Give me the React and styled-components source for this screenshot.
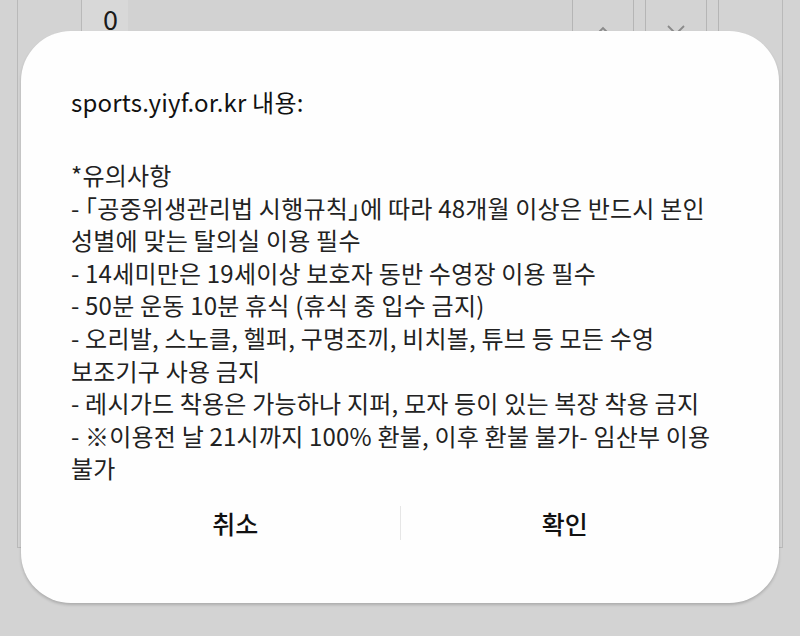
import React from "react";
import styled, { createGlobalStyle } from "styled-components";

const GlobalStyle = createGlobalStyle`
  html, body {
    margin: 0;
    padding: 0;
    background: #d3d3d3;
    font-family: "Noto Sans CJK KR", "Noto Sans", sans-serif;
  }
`;

const Page = styled.div`
  width: 800px;
  height: 636px;
  overflow: hidden;
  position: relative;
  background: #d3d3d3;
`;

const Panel = styled.div`
  margin: -40px 17px 0 17px;
  height: 588px;
  box-sizing: border-box;
  border: 1px solid #b9b9b9;
  border-top: none;
  display: flex;
  padding-left: 63px;
`;

const InputCell = styled.div`
  flex: 1;
  height: 120px;
  border-left: 1px solid #b9b9b9;
  background: linear-gradient(90deg, #d8d8d8 0 46px, #d2d2d2 46px);
  padding: 42px 0 0 21px;
  box-sizing: border-box;
  font-size: 27px;
  color: #1a1a1a;
  line-height: 34px;
`;

const SpinButton = styled.div`
  width: ${(p) => p.$w}px;
  height: 120px;
  margin-left: ${(p) => p.$gap}px;
  border-left: 1px solid #b5b5b5;
  border-right: ${(p) => (p.$edge ? "none" : "1px solid #b5b5b5")};
  box-sizing: border-box;
  display: flex;
  justify-content: center;
  padding-top: 64px;
  color: #8a8a8a;
`;

const Overlay = styled.div`
  position: absolute;
  inset: 0;
  display: flex;
  align-items: center;
  justify-content: center;
`;

const Dialog = styled.div`
  width: 758px;
  height: 572px;
  box-sizing: border-box;
  background: #fefefe;
  border-radius: 50px;
  box-shadow: 0 2px 3px rgba(0, 0, 0, 0.18);
  padding: 56px 50px 0 50px;
  display: flex;
  flex-direction: column;
  margin-top: -2px;
`;

const Title = styled.div`
  font-size: 24px;
  line-height: 30px;
  color: #111;
  letter-spacing: 0.2px;
`;

const Message = styled.div`
  margin-top: 42px;
  font-size: 24px;
  line-height: 32.6px;
  color: #222;
  white-space: pre;
  letter-spacing: 0.2px;
`;

const Bracket = styled.span`
  font-feature-settings: "halt";
`;

const ButtonRow = styled.div`
  margin-top: 10px;
  height: 56px;
  display: flex;
  align-items: center;
`;

const DialogButton = styled.button`
  flex: 1;
  height: 100%;
  border: none;
  background: transparent;
  font-family: inherit;
  font-size: 25px;
  font-weight: 500;
  color: #111;
  padding: 0;
`;

const Divider = styled.div`
  width: 1px;
  height: 34px;
  background: #e6e6e6;
`;

function Chevron({ down }) {
  return (
    <svg width="20" height="12" viewBox="0 0 20 12">
      <path
        d={down ? "M2 2 L10 10 L18 2" : "M4 10 L10 4 L16 10"}
        fill="none"
        stroke="currentColor"
        strokeWidth="1.8"
      />
    </svg>
  );
}

export default function App() {
  return (
    <Page>
      <GlobalStyle />
      <Panel>
        <InputCell>0</InputCell>
        <SpinButton $w={62} $gap={0}>
          <Chevron />
        </SpinButton>
        <SpinButton $w={62} $gap={11}>
          <Chevron down />
        </SpinButton>
        <SpinButton $w={64} $gap={11} $edge />
      </Panel>
      <Overlay>
        <Dialog>
          <Title>sports.yiyf.or.kr 내용:</Title>
          <Message>
            {"*유의사항\n- "}
            <Bracket>「</Bracket>
            {"공중위생관리법 시행규칙"}
            <Bracket>」</Bracket>
            {"에 따라 48개월 이상은 반드시 본인\n" +
              "성별에 맞는 탈의실 이용 필수\n" +
              "- 14세미만은 19세이상 보호자 동반 수영장 이용 필수\n" +
              "- 50분 운동 10분 휴식 (휴식 중 입수 금지)\n" +
              "- 오리발, 스노클, 헬퍼, 구명조끼, 비치볼, 튜브 등 모든 수영\n" +
              "보조기구 사용 금지\n" +
              "- 레시가드 착용은 가능하나 지퍼, 모자 등이 있는 복장 착용 금지\n" +
              "- ※이용전 날 21시까지 100% 환불, 이후 환불 불가- 임산부 이용\n" +
              "불가"}
          </Message>
          <ButtonRow>
            <DialogButton>취소</DialogButton>
            <Divider />
            <DialogButton>확인</DialogButton>
          </ButtonRow>
        </Dialog>
      </Overlay>
    </Page>
  );
}
